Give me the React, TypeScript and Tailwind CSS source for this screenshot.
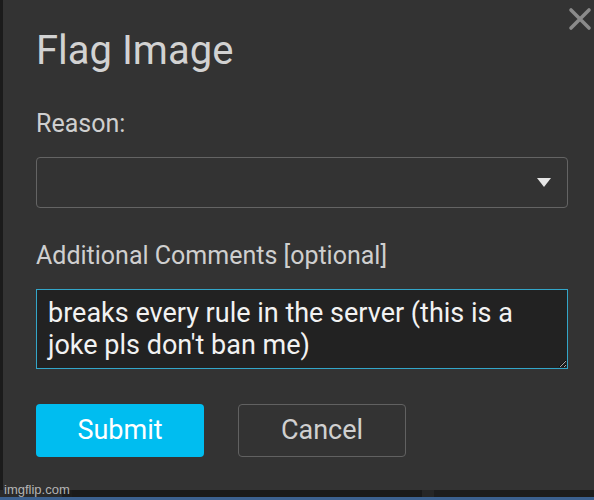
import React from "react";

const CloseIcon = () => (
  <svg width="24" height="24" viewBox="0 0 24 24" className="block">
    <path d="M3 3 L21 21 M21 3 L3 21" stroke="#8a8a8a" strokeWidth="3.6" strokeLinecap="round" />
  </svg>
);

const FlagDialog = () => {
  return (
    <div className="relative flex-1 bg-[#333333] pl-[33px] pr-[26px]" style={{ fontFamily: "Roboto, 'Liberation Sans', sans-serif" }}>
      <button className="absolute right-[2px] top-[7px]">
        <CloseIcon />
      </button>
      <h1 className="mt-[31px] text-[40px] leading-[40px] font-normal text-[#d2d2d2]">Flag Image</h1>
      <p className="mt-[38px] text-[25px] leading-[30px] text-[#cfcfcf]">Reason:</p>
      <div className="mt-[18px] h-[51px] rounded-[4px] border border-[#646464] flex items-center justify-end pr-[16px]">
        <svg width="14" height="9" viewBox="0 0 14 9">
          <path d="M0 0 H14 L7 9 Z" fill="#e6e6e6" />
        </svg>
      </div>
      <p className="mt-[33px] text-[25px] leading-[30px] text-[#cfcfcf]">Additional Comments [optional]</p>
      <textarea
        className="mt-[18px] block w-full h-[80px] bg-[#222222] border border-[#33a6c9] pl-[11px] pr-[4px] pt-[7px] text-[27px] leading-[32px] text-[#f2f2f2] outline-none"
        defaultValue="breaks every rule in the server (this is a joke pls don't ban me)"
      />
      <div className="mt-[35px] flex gap-[34px]">
        <button className="h-[53px] w-[168px] rounded-[4px] bg-[#00bdf0] text-[27px] text-white">Submit</button>
        <button className="h-[53px] w-[168px] rounded-[4px] border border-[#616161] text-[27px] text-[#d0d0d0]">Cancel</button>
      </div>
    </div>
  );
};

export default function App() {
  return (
    <div className="relative w-[594px] h-[500px] flex flex-col overflow-hidden bg-[#333333]">
      <div className="flex flex-1">
        <div className="w-[3px] bg-[#1b1b1b]" />
        <FlagDialog />
      </div>
      <div className="flex h-[7px] bg-[#1d1d1d]">
        <div className="w-[62px] bg-[#2a2a2a]" />
        <div className="w-[10px]" />
        <div className="w-[350px] bg-[#1a1a1a]" />
        <div className="w-[12px] bg-[#262626]" />
      </div>
      <div className="h-[3px] bg-[#3c6190]" />
      <span
        className="absolute left-[4px] bottom-[3px] text-[13px] leading-[14px] text-[#d8d8d8]/80"
        style={{ fontFamily: "'Liberation Sans', Arial, sans-serif" }}
      >
        imgflip.com
      </span>
    </div>
  );
}
